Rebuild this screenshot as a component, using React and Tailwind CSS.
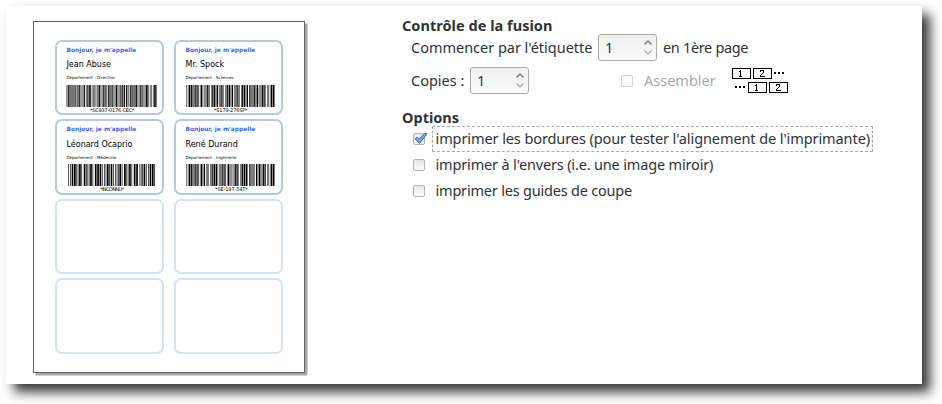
import React from "react";

const CODE39 = {
  "0": "nnnwwnwnn", "1": "wnnwnnnnw", "2": "nnwwnnnnw", "3": "wnwwnnnnn",
  "4": "nnnwwnnnw", "5": "wnnwwnnnn", "6": "nnwwwnnnn", "7": "nnnwnnwnw",
  "8": "wnnwnnwnn", "9": "nnwwnnwnn", C: "wnwnnwnnn", E: "wnnnwwnnn",
  I: "nnwnnwwnn", N: "nnnnwnnww", O: "wnnnwnnwn", P: "nnwnwnnwn",
  S: "nnwnnnwwn", T: "nnnnwnwwn", U: "wwnnnnnnw", " ": "nwwnnnwnn",
  "-": "nwnnnnwnw", "*": "nwnnwnwnn",
};

function Barcode({ value }) {
  const bars = [];
  let x = 0;
  for (const ch of value) {
    [...CODE39[ch]].forEach((c, i) => {
      const w = c === "w" ? 2.5 : 1;
      if (i % 2 === 0) bars.push([x, w]);
      x += w;
    });
    x += 1;
  }
  return (
    <svg viewBox={`0 0 ${x - 1} 10`} preserveAspectRatio="none" className="block h-full w-full">
      {bars.map(([bx, w]) => (
        <rect key={bx} x={bx} y="0" width={w} height="10" fill="#000" />
      ))}
    </svg>
  );
}

const badges = [
  { name: "Jean Abuse", dept: "Direction", code: "*SC937-0176 CEC*", bar: "ml-[9px] w-[91px]", label: "ml-[33px] tracking-[-0.2px]" },
  { name: "Mr. Spock", dept: "Sciences", code: "*S179-276SP*", bar: "ml-[10px] w-[89px]", label: "ml-[38px] tracking-[-0.15px]" },
  { name: "Léonard Ocaprio", dept: "Médecine", code: "*INCONNU*", bar: "ml-[11px] w-[87px]", label: "ml-[43px] tracking-[-0.6px]" },
  { name: "René Durand", dept: "Ingénierie", code: "*SE-197-54T*", bar: "ml-[10px] w-[89px]", label: "ml-[39px] tracking-[-0.1px]" },
];

function Badge({ name, dept, code, bar, label }) {
  return (
    <div className="h-[75.5px] w-[109px] overflow-hidden rounded-[7px] border-2 border-[#b3cae3] whitespace-nowrap text-black">
      <div className="mt-[4px] ml-[9.5px] h-[8px] text-[5.9px] leading-[8px] font-bold text-[#3d67f5]">Bonjour, je m'appelle</div>
      <div className="mt-[5.5px] ml-[9.5px] h-[10px] text-[8px] leading-[11px]">{name}</div>
      <div className="mt-[6px] ml-[9.5px] h-[6px] text-[4px] leading-[6px]">Département : {dept}</div>
      <div className={`mt-[3.5px] h-[22px] ${bar}`}>
        <Barcode value={code} />
      </div>
      <div className={`h-[7px] text-[5px] leading-[7.5px] ${label}`}>{code}</div>
    </div>
  );
}

function Spin() {
  return (
    <div className="flex h-[27px] w-[59px] items-center justify-between rounded-[3px] border border-[#a9aca5] bg-linear-to-b from-[#f0f0ef] to-[#fbfbfb] pr-[3px] pl-[6px]">
      <span>1</span>
      <svg width="10" height="17" viewBox="0 0 10 17" fill="none" strokeWidth="1.5">
        <path d="M1.5 5.5 5 2l3.500 3.500" stroke="#7d7d7b" />
        <path d="M1.500 11.500 5 15l3.500-3.500" stroke="#b5b5b3" />
      </svg>
    </div>
  );
}

function Check({ checked, disabled }) {
  return (
    <svg width="16" height="14" viewBox="0 0 16 14" className="shrink-0">
      <defs>
        <linearGradient id="well" x1="0" y1="0" x2="0" y2="1">
          <stop offset="0" stopColor="#e6e6e4" />
          <stop offset="1" stopColor="#fff" />
        </linearGradient>
      </defs>
      <rect x="1.500" y="1.500" width="11" height="11" rx="1.500" fill={disabled ? "#fcfcfc" : "url(#well)"} stroke={disabled ? "#d3d3d0" : "#b0b2ab"} />
      {checked && (
        <path d="M3 7 5.200 5.200l2 2L12.600 1.500l2.500.3-7.500 9.500z" fill="#78aee6" stroke="#2f66a8" strokeWidth="1" strokeLinejoin="round" />
      )}
    </svg>
  );
}

function CollateIcon() {
  const one = "M1 1.500h1.500v-1M2.500 0v6.500M1 6.500h3";
  const two = "M.5 1.500v-1h3v2l-3 3v1h4";
  return (
    <svg width="57" height="26" viewBox="0 0 57 26" fill="none" stroke="#000" shapeRendering="crispEdges">
      <path d="M.5.500h18v10H.5zM21.500.500h18v10h-18zM16.500 14.500h18v10h-18zM37.500 14.500h18v10h-18z" />
      <path d={one} transform="translate(6 2)" />
      <path d={two} transform="translate(28 2)" />
      <path d={one} transform="translate(22 16)" />
      <path d={two} transform="translate(44 16)" />
      <path d="M42 5h2M46 5h2M50 5h2M3 19h2M7 19h2M11 19h2" strokeWidth="2" />
    </svg>
  );
}

export default function App() {
  return (
    <div className="h-[404px] w-[942px] overflow-hidden bg-white pt-[6px] pl-[6px] font-['Noto_Sans',sans-serif] text-[14.5px] whitespace-nowrap text-[#2e3436]">
      <div className="flex h-[378px] w-[916px] bg-white shadow-[8px_8px_11px_rgba(0,0,0,0.78)]">
        <div className="mt-[15px] ml-[27px] h-[352px] w-[272px] shrink-0 border-[1.500px] border-[#5f6464] bg-white font-['DejaVu_Sans',sans-serif] shadow-[2.5px_2.5px_0_#a8a8a8]">
          <div className="mt-[17.500px] ml-[21px] grid grid-cols-[109px_109px] gap-x-[10px] gap-y-[4px]">
            {badges.map((b) => (
              <Badge key={b.name} {...b} />
            ))}
            {[0, 1, 2, 3].map((i) => (
              <div key={i} className="h-[75.5px] rounded-[7px] border-2 border-[#d3e3f5]" />
            ))}
          </div>
        </div>

        <div className="ml-[97px] pt-[10px]">
          <h2 className="h-[18px] text-[14.5px] leading-[18px] font-bold tracking-[0.04px]">Contrôle de la fusion</h2>
          <div className="flex h-[27px] items-center pl-[9px]">
            <span className="w-[187px] tracking-[-0.02px]">Commencer par l'étiquette</span>
            <Spin />
            <span className="ml-[6px] tracking-[-0.33px]">en 1ère page</span>
          </div>
          <div className="mt-[6px] flex h-[27px] items-center pl-[9px]">
            <span className="w-[59px]">Copies :</span>
            <Spin />
            <div className="ml-[91px] flex w-[112px] items-center gap-[8px] text-[#a9aaa7]">
              <Check disabled />
              <span>Assembler</span>
            </div>
            <CollateIcon />
          </div>
          <h2 className="mt-[14px] h-[18px] text-[14.5px] leading-[18px] font-bold">Options</h2>
          <div className="flex h-[26px] items-center pl-[10px]">
            <Check checked />
            <span className="ml-[4px] h-[26px] w-[441px] border border-dashed border-[#aaa] pl-[2.5px] leading-[22px] tracking-[-0.09px]">
              imprimer les bordures (pour tester l'alignement de l'imprimante)
            </span>
          </div>
          <div className="flex h-[26px] items-center gap-[7.5px] pl-[10px]">
            <Check />
            <span className="tracking-[-0.16px]">imprimer à l'envers (i.e. une image miroir)</span>
          </div>
          <div className="flex h-[26px] items-center gap-[7.5px] pl-[10px]">
            <Check />
            <span className="tracking-[-0.2px]">imprimer les guides de coupe</span>
          </div>
        </div>
      </div>
    </div>
  );
}
